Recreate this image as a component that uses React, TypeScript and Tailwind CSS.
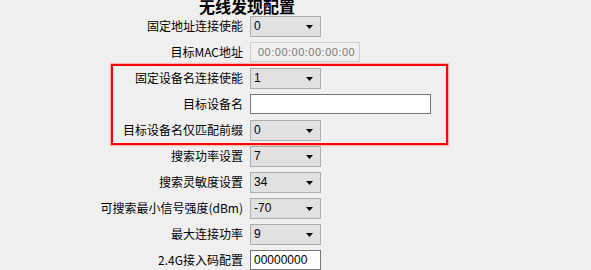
import React from "react";

const labelFont = { fontFamily: '"Noto Sans CJK SC", "Noto Sans", sans-serif' };

function Select({ value }: { value: string }) {
  return (
    <div className="relative flex h-[21px] w-[71px] items-center border border-[#adadad] bg-[#e1e1e1] pl-[3px] text-[12px] leading-none text-black [font-family:'Liberation_Sans',Arial,sans-serif]">
      <span>{value}</span>
      <svg className="absolute right-[6px] top-[8px]" width="8" height="4" viewBox="0 0 8 4">
        <path d="M0 0 H7 L3.5 4 Z" fill="#000" />
      </svg>
    </div>
  );
}

function Row({ label, children }: { label: string; children: React.ReactNode }) {
  return (
    <div className="flex h-[26px] items-center">
      <div className="w-[243px] shrink-0 whitespace-nowrap text-right text-[12px] leading-none text-black" style={labelFont}>
        {label}
      </div>
      <div className="ml-[7px] flex items-center">{children}</div>
    </div>
  );
}

export default function App() {
  return (
    <div className="relative h-[270px] w-[591px] overflow-hidden bg-[#f0f0f0]">
      <div className="h-[17px] overflow-visible">
        <div
          className="-mt-[4px] ml-[199px] whitespace-nowrap text-[16px] font-bold leading-[20px] text-black"
          style={labelFont}
        >
          无线发现配置
        </div>
      </div>
      <Row label="固定地址连接使能">
        <Select value="0" />
      </Row>
      <Row label="目标MAC地址">
        <div className="flex h-[20px] w-[110px] items-center border border-[#cfcfcf] bg-[#f0f0f0] pl-[7px] text-[11px] leading-none tracking-[0.5px] text-[#7a7a7a] [font-family:'Liberation_Sans',Arial,sans-serif]">
          00:00:00:00:00:00
        </div>
      </Row>
      <div className="relative">
        <Row label="固定设备名连接使能">
          <Select value="1" />
        </Row>
        <Row label="目标设备名">
          <div className="h-[20px] w-[181px] border border-[#767676] bg-white" />
        </Row>
        <Row label="目标设备名仅匹配前缀">
          <Select value="0" />
        </Row>
        <div className="pointer-events-none absolute left-[111px] top-[-1px] h-[81px] w-[337px] border-2 border-[#ff0000] shadow-[0_0_1px_1px_rgba(255,80,80,0.35)]" />
      </div>
      <Row label="搜索功率设置">
        <Select value="7" />
      </Row>
      <Row label="搜索灵敏度设置">
        <Select value="34" />
      </Row>
      <Row label="可搜索最小信号强度(dBm)">
        <Select value="-70" />
      </Row>
      <Row label="最大连接功率">
        <Select value="9" />
      </Row>
      <Row label="2.4G接入码配置">
        <div className="flex h-[20px] w-[71px] items-center border border-[#767676] bg-white pl-[3px] text-[12px] leading-none text-black [font-family:'Liberation_Sans',Arial,sans-serif]">
          00000000
        </div>
      </Row>
    </div>
  );
}
